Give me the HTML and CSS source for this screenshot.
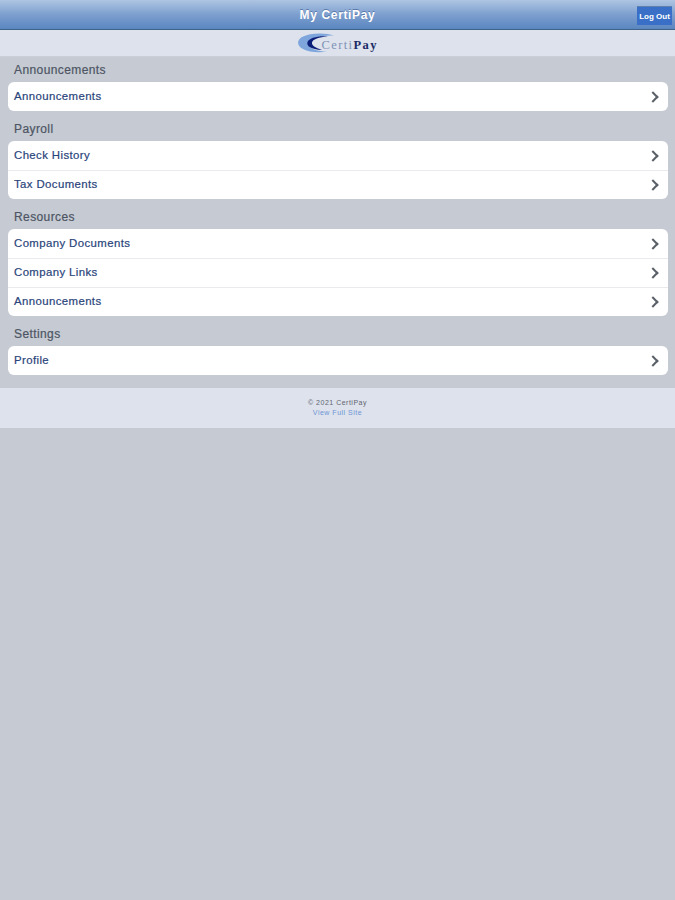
FILE: index.html
```html
<!DOCTYPE html>
<html lang="en">
  <head>
    <meta charset="utf-8" />
    <title>My CertiPay</title>
    <link rel="stylesheet" href="styles.css">
  </head>
  <body>
    <header class="top-bar">
      <h1 class="top-title">My CertiPay</h1>
      <a class="logout-btn" href="#">Log Out</a>
    </header>

    <div class="logo-bar">
      <div class="logo">
        <svg class="logo-mark" width="38" height="20" viewBox="0 0 38 20" xmlns="http://www.w3.org/2000/svg">
          <path d="M36 2.5C28 -0.5 12 -0.5 4 4C-1.5 7.500 -1 12.500 4 15.500C11 19.500 22 20 29 18.500C20 18.500 12 16 10 11.500C8 6.500 20 2 36 2.500Z" fill="#7fa6dc"/>
          <path d="M30 3.500C20 2.500 11 5 9.500 9C8 13 13 16.500 24 17C17 14.500 13.500 12.500 14 9.500C14.500 6.500 21 4 30 3.500Z" fill="#0c1f78"/>
        </svg>
        <span class="logo-text"><span class="logo-certi">Certi</span><span class="logo-pay">Pay</span></span>
      </div>
    </div>

    <main class="content">
      <section class="group">
        <h2 class="group-title">Announcements</h2>
        <ul class="menu">
          <li class="menu-item"><a href="#">Announcements</a></li>
        </ul>
      </section>
      <section class="group">
        <h2 class="group-title">Payroll</h2>
        <ul class="menu">
          <li class="menu-item"><a href="#">Check History</a></li>
          <li class="menu-item"><a href="#">Tax Documents</a></li>
        </ul>
      </section>
      <section class="group">
        <h2 class="group-title">Resources</h2>
        <ul class="menu">
          <li class="menu-item"><a href="#">Company Documents</a></li>
          <li class="menu-item"><a href="#">Company Links</a></li>
          <li class="menu-item"><a href="#">Announcements</a></li>
        </ul>
      </section>
      <section class="group">
        <h2 class="group-title">Settings</h2>
        <ul class="menu">
          <li class="menu-item"><a href="#">Profile</a></li>
        </ul>
      </section>
    </main>

    <footer class="page-footer">
      <div class="copyright">© 2021 CertiPay</div>
      <a class="full-site" href="#">View Full Site</a>
    </footer>
  </body>
</html>
```

FILE: styles.css
```css
* {
  box-sizing: border-box;
}

html, body {
  height: 100%;
}

body {
  margin: 0;
  background: #c5cad3;
  font-family: "Liberation Sans", Arial, sans-serif;
}

/* Top bar */
.top-bar {
  position: relative;
  height: 30px;
  display: flex;
  align-items: center;
  justify-content: center;
  background: linear-gradient(180deg, #aec5e2 0%, #7d9fcf 50%, #5a86c0 100%);
  border-bottom: 1px solid #3f6288;
}

.top-title {
  margin: 0;
  color: #fff;
  font-size: 12px;
  font-weight: 700;
  letter-spacing: 0.65px;
  text-shadow: 0 -1px 0 rgba(40,70,120,0.5);
}

.logout-btn {
  position: absolute;
  top: 6px;
  right: 3px;
  width: 35px;
  height: 19px;
  display: flex;
  align-items: center;
  justify-content: center;
  background: #3a6fc8;
  border-top: 1px solid #5c7fae;
  color: #fff;
  font-size: 8px;
  font-weight: 700;
  text-decoration: none;
}

/* Logo */
.logo-bar {
  height: 27px;
  display: flex;
  align-items: center;
  justify-content: center;
  background: #dde2ec;
  border-bottom: 1px solid #c9ced8;
}

.logo {
  position: relative;
  width: 80px;
  height: 20px;
}

.logo-mark {
  position: absolute;
  top: 0;
  left: 0;
}

.logo-text {
  position: absolute;
  top: 4px;
  left: 24px;
  font-family: "Liberation Serif", "Times New Roman", serif;
  font-size: 12.500px;
  line-height: 16px;
  letter-spacing: 1.4px;
  white-space: nowrap;
}

.logo-certi {
  color: #7f93b8;
}

.logo-pay {
  color: #1b2a66;
  font-weight: 700;
}

/* Menu groups */
.content {
  padding: 6px 7px 13px 8px;
}

.group {
  margin-bottom: 11px;
}

.group:last-child {
  margin-bottom: 0;
}

.group-title {
  margin: 0;
  height: 19px;
  padding-left: 6px;
  color: #4d5563;
  font-size: 12px;
  font-weight: 400;
  line-height: 14px;
  letter-spacing: 0.4px;
  -webkit-text-stroke: 0.2px #4d5563;
}

.menu {
  list-style: none;
  margin: 0;
  padding: 0;
  background: #fff;
  border-radius: 6px;
}

.menu-item {
  height: 29px;
  border-top: 1px solid #e8eaee;
}

.menu-item:first-child {
  border-top: 0;
}

.menu-item a {
  position: relative;
  height: 100%;
  display: flex;
  align-items: center;
  padding: 0 0 2px 6px;
  color: #29447a;
  font-size: 11.400px;
  letter-spacing: 0.4px;
  -webkit-text-stroke: 0.2px #29447a;
  text-decoration: none;
}

.menu-item a::after {
  content: "";
  position: absolute;
  top: 50%;
  right: 11px;
  width: 6px;
  height: 6px;
  margin-top: -4px;
  border-top: 2px solid #5a6068;
  border-right: 2px solid #5a6068;
  transform: rotate(45deg);
}

/* Footer */
.page-footer {
  height: 40px;
  padding-top: 10px;
  background: #dde2ec;
  text-align: center;
  font-size: 7px;
  line-height: 10px;
  letter-spacing: 0.5px;
}

.copyright {
  color: #5f6570;
}

.full-site {
  display: block;
  color: #6d95d6;
  text-decoration: none;
}
```
